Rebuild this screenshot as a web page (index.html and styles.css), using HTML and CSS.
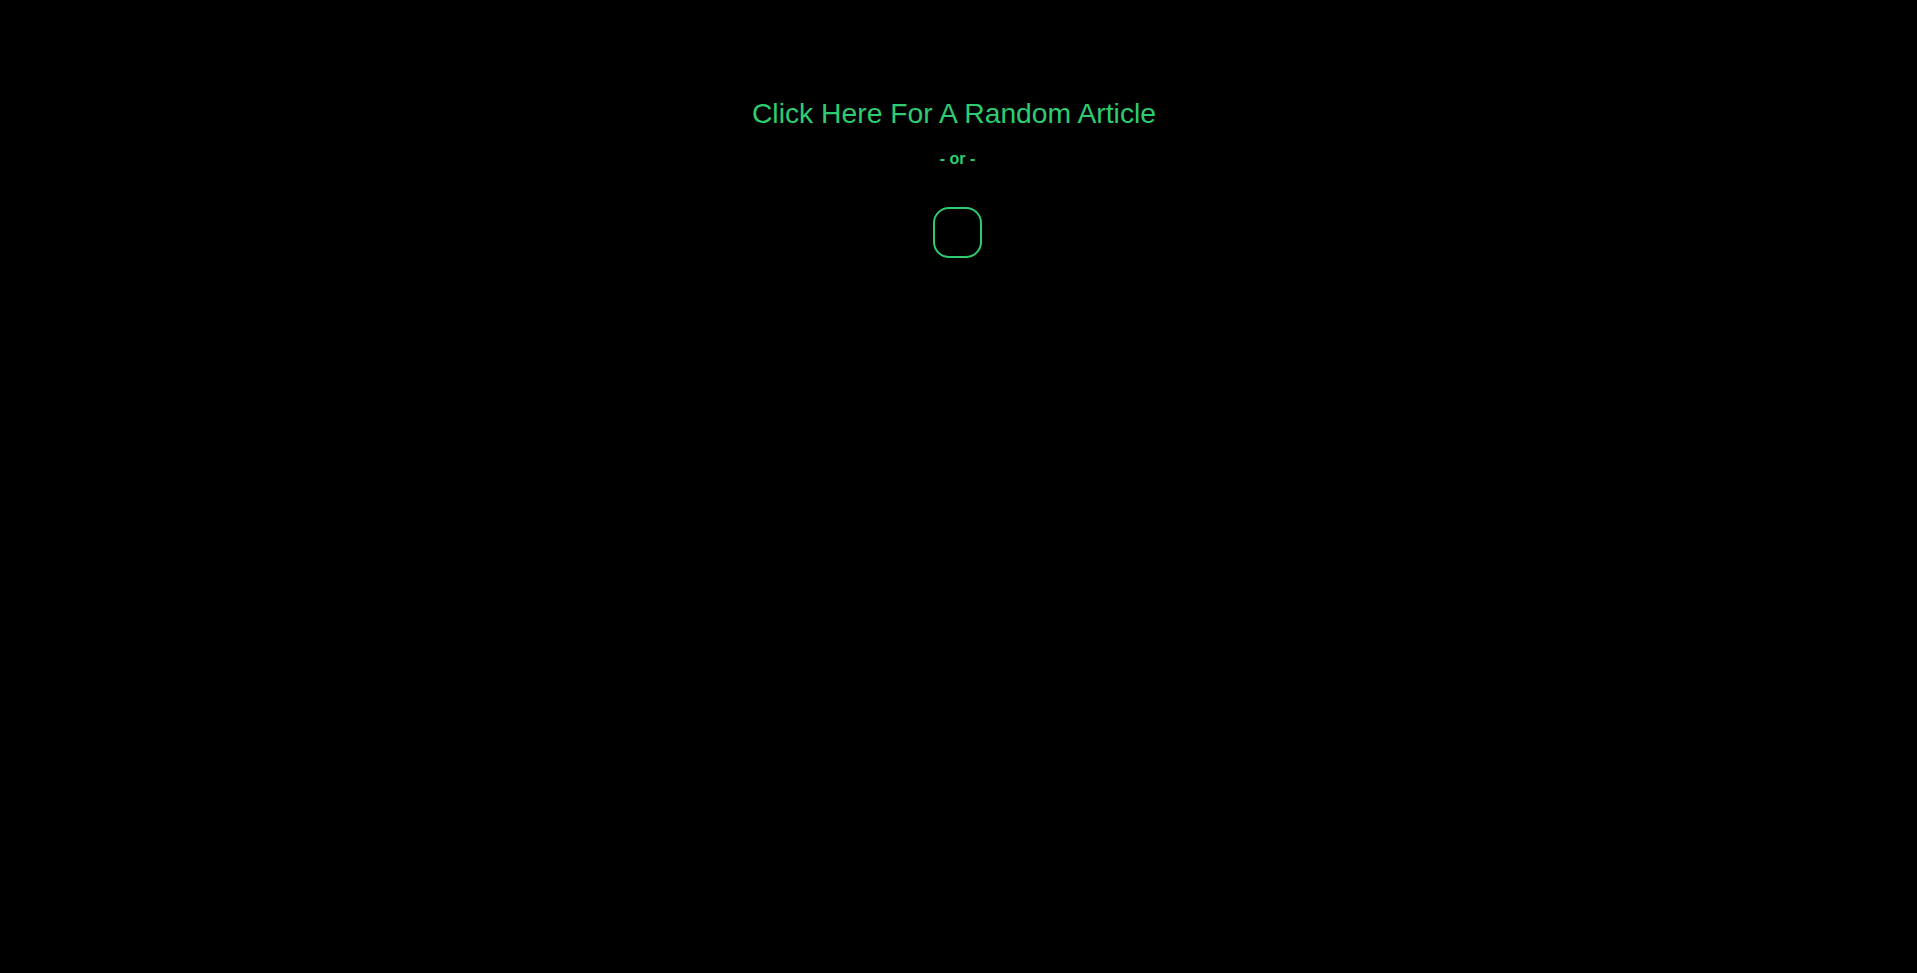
FILE: index.html
```html
<!DOCTYPE html>
<html>
<head>
<meta charset="utf-8">
<title>Random Article</title>
<link rel="stylesheet" href="styles.css">
</head>
<body>
<main class="page">
  <a class="title" href="#">Click Here For A Random Article</a>
  <div class="or">- or -</div>
  <button class="box" type="button"></button>
</main>
</body>
</html>
```

FILE: styles.css
```css
html, body {
  margin: 0;
  padding: 0;
  background: #000;
  height: 100%;
}
body {
  font-family: "Liberation Sans", Arial, sans-serif;
  color: #2ecc71;
}
.page {
  display: flex;
  flex-direction: column;
  align-items: center;
  padding-top: 97px;
  padding-right: 2px;
}
.title {
  display: block;
  font-size: 28.3px;
  line-height: 32px;
  padding-right: 7px;
  color: #2ecc71;
  text-decoration: none;
}
.or {
  margin-top: 21px;
  font-size: 16px;
  font-weight: bold;
  line-height: 18px;
}
.box {
  margin-top: 39px;
  width: 49px;
  height: 51px;
  padding: 0;
  background: transparent;
  border: 2px solid #2ecc71;
  border-radius: 16px;
}
```
